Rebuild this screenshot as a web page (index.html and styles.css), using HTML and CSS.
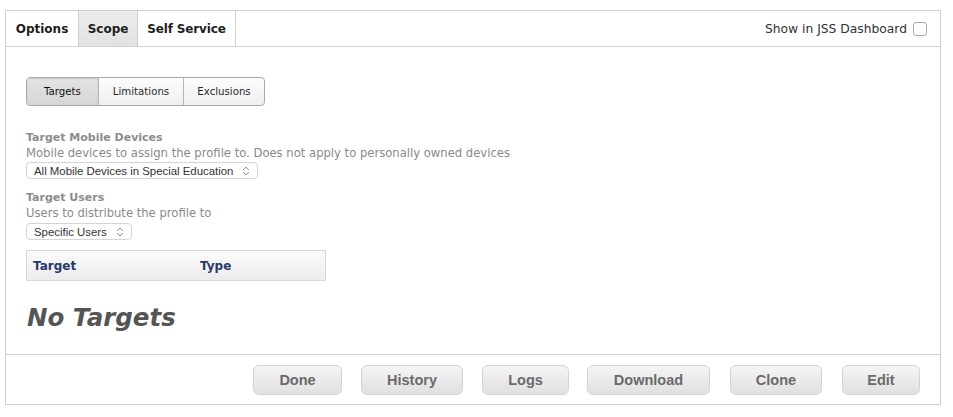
FILE: index.html
```html
<!DOCTYPE html>
<html>
<head>
<meta charset="utf-8">
<link rel="stylesheet" href="styles.css">
</head>
<body>
<div class="panel">
  <div class="tabbar">
    <div class="tabs">
      <div class="tab">Options</div>
      <div class="tab active">Scope</div>
      <div class="tab">Self Service</div>
    </div>
    <label class="dash">Show in JSS Dashboard <span class="checkbox"></span></label>
  </div>
  <div class="content">
    <div class="segmented">
      <div class="seg selected">Targets</div>
      <div class="seg">Limitations</div>
      <div class="seg">Exclusions</div>
    </div>
    <div class="group first">
      <div class="label">Target Mobile Devices</div>
      <div class="desc">Mobile devices to assign the profile to. Does not apply to personally owned devices</div>
      <div class="select"><span>All Mobile Devices in Special Education</span>
        <svg class="arrows" width="8" height="10" viewBox="0 0 8 10"><path d="M1.2 3.8 L4 1.2 L6.8 3.8 M1.2 6.2 L4 8.8 L6.8 6.2" fill="none" stroke="#8a8a8a" stroke-width="1"/></svg>
      </div>
    </div>
    <div class="group second">
      <div class="label">Target Users</div>
      <div class="desc">Users to distribute the profile to</div>
      <div class="select"><span>Specific Users</span>
        <svg class="arrows" width="8" height="10" viewBox="0 0 8 10"><path d="M1.2 3.8 L4 1.2 L6.8 3.8 M1.2 6.2 L4 8.8 L6.8 6.2" fill="none" stroke="#8a8a8a" stroke-width="1"/></svg>
      </div>
    </div>
    <div class="table-head">
      <div class="col-target">Target</div>
      <div class="col-type">Type</div>
    </div>
    <div class="empty">No Targets</div>
  </div>
  <div class="footer">
    <button class="btn btn-done">Done</button>
    <button class="btn btn-history">History</button>
    <button class="btn btn-logs">Logs</button>
    <button class="btn btn-download">Download</button>
    <button class="btn btn-clone">Clone</button>
    <button class="btn btn-edit">Edit</button>
  </div>
</div>
</body>
</html>
```
FILE: styles.css
```css
html, body {
  margin: 0;
  padding: 0;
  background: #fff;
}
body {
  padding: 10px 0 0 5px;
  font-family: "DejaVu Sans", sans-serif;
  color: #333;
}
.panel {
  width: 936px;
  box-sizing: border-box;
  border: 1px solid #cfcfcf;
}
.tabbar {
  display: flex;
  justify-content: space-between;
  align-items: stretch;
  height: 35px;
  border-bottom: 1px solid #cfcfcf;
}
.tabs {
  display: flex;
}
.tab {
  display: flex;
  align-items: center;
  justify-content: center;
  border-right: 1px solid #cfcfcf;
  font-size: 12px;
  font-weight: bold;
  color: #1e1e1e;
  box-sizing: border-box;
}
.tab:nth-child(1) { width: 73px; }
.tab:nth-child(2) { width: 59px; }
.tab:nth-child(3) { width: 98px; letter-spacing: -0.15px; }
.tab.active {
  background: linear-gradient(#ececec, #e2e2e2);
}
.dash {
  display: flex;
  align-items: center;
  gap: 6px;
  font-size: 12.3px;
  color: #333;
  padding-right: 13px;
}
.checkbox {
  display: inline-block;
  width: 12px;
  height: 12px;
  border: 1px solid #a8a8a8;
  border-radius: 3px;
  background: #fff;
}
.content {
  height: 307px;
  box-sizing: border-box;
  padding: 30px 20px 0 20px;
}
.segmented {
  display: flex;
  width: 239px;
  height: 29px;
  box-sizing: border-box;
  border: 1px solid #a9a9a9;
  border-radius: 4px;
  overflow: hidden;
  background: linear-gradient(#fdfdfd, #efefef);
  font-size: 10.2px;
  color: #2a2a2a;
}
.seg {
  display: flex;
  align-items: center;
  justify-content: center;
  border-right: 1px solid #b5b5b5;
}
.seg:last-child { border-right: none; flex: 1; }
.seg:nth-child(1) { width: 71px; }
.seg:nth-child(2) { width: 84px; }
.seg.selected {
  background: linear-gradient(#e4e4e4, #d6d6d6);
  box-shadow: inset 0 1px 2px rgba(0,0,0,0.12);
  color: #111;
}
.group.first { margin-top: 22px; }
.group.second { margin-top: 8px; }
.label {
  font-size: 11px;
  font-weight: bold;
  color: #8c8c8c;
  line-height: 15px;
  padding-top: 2px;
}
.desc {
  font-size: 11.6px;
  color: #8a8a8a;
  line-height: 16px;
}
.select {
  display: inline-flex;
  align-items: center;
  gap: 9px;
  margin-top: 1px;
  height: 17px;
  box-sizing: border-box;
  padding: 0 7px 0 7px;
  border: 1px solid #d4d4d4;
  border-radius: 4px;
  background: #fff;
  font-family: "Liberation Sans", Arial, sans-serif;
  font-size: 11.4px;
  color: #333;
  vertical-align: top;
}
.second .select { margin-top: 2px; }
.arrows { display: block; }
.table-head {
  display: flex;
  align-items: center;
  margin-top: 10px;
  width: 300px;
  height: 31px;
  box-sizing: border-box;
  border: 1px solid #d6d6d6;
  background: linear-gradient(#fbfbfb, #ececec);
  font-size: 12px;
  font-weight: bold;
  color: #27396a;
}
.col-target { width: 173px; padding-left: 6px; box-sizing: border-box; }
.empty {
  margin-top: 22px;
  line-height: 30px;
  font-size: 24.5px;
  font-weight: bold;
  font-style: italic;
  color: #555;
  padding-left: 1px;
}
.footer {
  display: flex;
  justify-content: flex-end;
  align-items: flex-start;
  height: 50px;
  box-sizing: border-box;
  border-top: 1px solid #cfcfcf;
  padding: 10px 20px 0 0;
}
.btn {
  height: 30px;
  box-sizing: border-box;
  border: 1px solid #d3d3d3;
  border-radius: 6px;
  background: linear-gradient(#f5f5f5, #e0e0e0);
  font-family: "Liberation Sans", Arial, sans-serif;
  font-weight: bold;
  font-size: 14.5px;
  color: #6a6a6a;
  padding: 0;
  margin: 0;
}
.btn-done { width: 89px; }
.btn-history { width: 102px; margin-left: 19px; }
.btn-logs { width: 87px; margin-left: 19px; }
.btn-download { width: 123px; margin-left: 18px; }
.btn-clone { width: 92px; margin-left: 20px; }
.btn-edit { width: 78px; margin-left: 20px; }
```
